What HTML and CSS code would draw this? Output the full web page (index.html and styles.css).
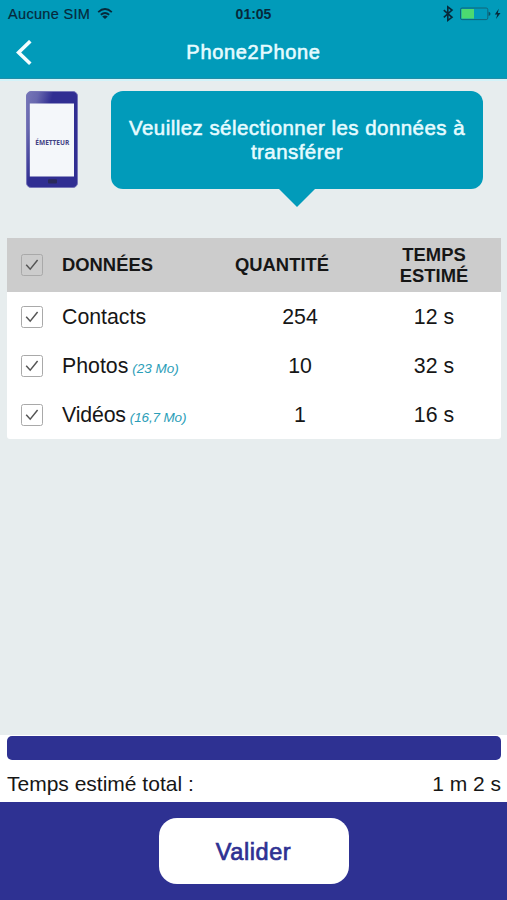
FILE: index.html
```html
<!DOCTYPE html>
<html lang="fr">
<head>
<meta charset="utf-8">
<title>Phone2Phone</title>
<link rel="stylesheet" href="styles.css">
</head>
<body>
<div class="app">
  <header class="header">
    <div class="status">
      <div class="carrier">
        <span>Aucune SIM</span>
        <svg width="16" height="12" viewBox="0 0 16 12" fill="none" stroke="currentColor" stroke-width="1.8">
          <path d="M1.2 4.1Q8 -2.1 14.8 4.1"/><path d="M3.8 6.8Q8 3.2 12.2 6.8"/><path d="M8 11.1L5.2 8.5Q8 6.4 10.8 8.5Z" fill="currentColor" stroke="none"/>
        </svg>
      </div>
      <span class="clock">01:05</span>
      <div class="power">
        <svg width="60" height="18" viewBox="0 0 60 18" fill="none" stroke="currentColor">
          <path d="M1.8 5.1L10 12.3L5.8 15.5V1.9L10 5.1L1.8 12.3" stroke-width="1.6"/>
          <rect x="18.5" y="3" width="27.3" height="11.6" rx="1.6" stroke="#126579"/>
          <rect x="19.5" y="4" width="12.5" height="9.6" fill="#4cda70" stroke="none"/>
          <path d="M46.6 6.7Q48.5 7.1 48.5 8.8T46.6 10.9Z" fill="#0d5163" stroke="none"/>
          <path d="M56.8 3.7L52.8 9.5H55.3L54 13.9L58.5 8H55.8Z" fill="currentColor" stroke="none"/>
        </svg>
      </div>
    </div>
    <div class="nav">
      <svg class="back" width="18" height="26" viewBox="0 0 18 26" fill="none" stroke="#f4fdff" stroke-width="3.6"><path d="M16.3 1.2L4.6 12.5L16.3 23.8"/></svg>
      <h1 class="title">Phone2Phone</h1>
    </div>
  </header>

  <section class="intro">
    <svg class="phone" width="52" height="98" viewBox="0 0 52 98">
      <defs><linearGradient id="shine" x1="0" y1="0" x2=".42" y2=".22"><stop offset="0" stop-color="#7777b8"/><stop offset=".45" stop-color="#6767ae"/><stop offset="1" stop-color="#302e92"/></linearGradient></defs>
      <rect x=".5" y=".5" width="51" height="96" rx="4.5" fill="url(#shine)" stroke="#7776b8"/>
      <rect x="3.8" y="12.5" width="44.2" height="73" fill="#f4f7fa"/>
      <rect x="22" y="88.3" width="9" height="4.2" rx="1" fill="#29295a"/>
      <text x="26.3" y="54" class="phone-label" text-anchor="middle" textLength="34" lengthAdjust="spacingAndGlyphs">ÉMETTEUR</text>
    </svg>
    <div class="bubble"><p>Veuillez sélectionner les données à<br>transférer</p></div>
  </section>

  <main class="table">
    <div class="row head">
      <span class="check"><svg width="14" height="12" viewBox="0 0 14 12"><path d="M1.2 5.7L5.2 10.2L12.6 1"/></svg></span>
      <span>DONNÉES</span><span class="qty">QUANTITÉ</span><span class="time">TEMPS<br>ESTIMÉ</span>
    </div>
    <div class="row">
      <span class="check"><svg width="14" height="12" viewBox="0 0 14 12"><path d="M1.2 5.7L5.2 10.2L12.6 1"/></svg></span>
      <span class="cell">Contacts</span><span class="cell qty">254</span><span class="cell time">12 s</span>
    </div>
    <div class="row">
      <span class="check"><svg width="14" height="12" viewBox="0 0 14 12"><path d="M1.2 5.7L5.2 10.2L12.6 1"/></svg></span>
      <span class="cell">Photos<em>(23 Mo)</em></span><span class="cell qty">10</span><span class="cell time">32 s</span>
    </div>
    <div class="row">
      <span class="check"><svg width="14" height="12" viewBox="0 0 14 12"><path d="M1.2 5.7L5.2 10.2L12.6 1"/></svg></span>
      <span class="cell tight">Vidéos<em>(16,7 Mo)</em></span><span class="cell qty">1</span><span class="cell time">16 s</span>
    </div>
  </main>

  <section class="summary">
    <div class="progress"></div>
    <div class="total"><span>Temps estimé total :</span><span>1 m 2 s</span></div>
  </section>
  <footer class="footer"><button class="submit">Valider</button></footer>
</div>
</body>
</html>
```

FILE: styles.css
```css
* { box-sizing: border-box; }
body { margin: 0; font-family: "Liberation Sans", Arial, sans-serif; color: #161616; }
svg { display: block; flex: none; }
.app { width: 507px; height: 900px; display: flex; flex-direction: column; background: #e7edee; overflow: hidden; }
.header { height: 79px; background: #019bba; border-bottom: 1px solid #238da7; flex: none; }
.status { height: 27px; display: grid; grid-template-columns: 1fr auto 1fr; align-items: center; padding: 0 5px 0 8px; color: #07293a; }
.carrier { display: flex; align-items: center; gap: 7px; font-size: 14.5px; letter-spacing: .32px; -webkit-text-stroke: .2px; }
.clock { margin-right: 3px; font-size: 14px; font-weight: bold; }
.power { justify-self: end; }
.nav { height: 51px; display: grid; grid-template-columns: 44px 1fr 44px; align-items: center; }
.back { margin-left: 14px; }
.title { margin: 0; text-align: center; font-size: 20px; font-weight: normal; letter-spacing: .68px; color: #e6fbff; -webkit-text-stroke: .6px; }
.intro { height: 159px; flex: none; display: flex; align-items: flex-start; gap: 33px; padding: 10px 24px 0 26px; border-top: 2px solid #d3f3f9; }
.phone-label { font: bold 7.5px "Open Sans", sans-serif; fill: #424184; }
.bubble { position: relative; width: 372px; height: 98px; border-radius: 12px; background: #019bba; color: #e6fbff; display: flex; align-items: center; justify-content: center; text-align: center; }
.bubble::after { content: ""; position: absolute; left: 167px; top: 97px; width: 38px; height: 19px; background: #019bba; clip-path: polygon(0 0, 100% 0, 50% 100%); }
.bubble p { margin: 0; font-size: 20.5px; line-height: 24.5px; letter-spacing: .45px; -webkit-text-stroke: .55px; white-space: nowrap; }
.table { width: 494px; margin-left: 7px; background: #fff; border-radius: 0 0 3px 3px; }
.row { height: 49px; display: grid; grid-template-columns: 55px 171px 134px 134px; align-items: center; font-size: 21.3px; }
.head { height: 54px; background: #ccc; font-size: 18.4px; line-height: 21.5px; font-weight: bold; }
.cell { padding-top: 2px; }
.tight { letter-spacing: -.15px; }
.check { width: 22px; height: 22px; margin-left: 14px; display: grid; place-items: center; border: 1px solid #a9a9a9; border-radius: 2.5px; }
.check path { fill: none; stroke: #555; stroke-width: 1.5; }
.qty { text-align: center; }
.head .qty { text-align: left; padding-left: 2px; }
.time { text-align: center; }
em { margin-left: 4px; color: #2b9eb8; font-size: 13.5px; }
.summary { height: 67px; margin-top: auto; flex: none; background: #fff; padding: 1px 6px 0 7px; }
.progress { height: 24px; border-radius: 5px; background: #2e3192; }
.total { height: 46px; padding-top: 2px; display: flex; align-items: center; justify-content: space-between; font-size: 21px; }
.footer { height: 98px; flex: none; background: #2e3192; display: flex; justify-content: center; padding-top: 16px; }
.submit { width: 190px; height: 66px; padding: 2px 0 0; border: 0; border-radius: 18px; background: #fff; color: #2e3192; font: 23.5px "Liberation Sans", Arial, sans-serif; letter-spacing: .6px; -webkit-text-stroke: .7px; }
```
